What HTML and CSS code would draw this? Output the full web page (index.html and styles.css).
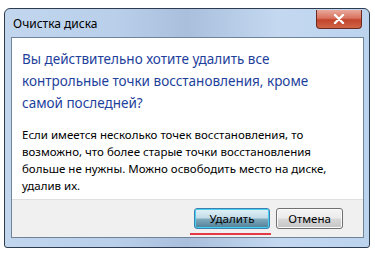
FILE: index.html
```html
<!DOCTYPE html>
<html lang="ru">
<head>
    <meta charset="UTF-8">
    <meta name="viewport" content="width=device-width, initial-scale=1.0">
    <title>Очистка диска</title>
    <link rel="stylesheet" href="styles.css">
</head>
<body>
    <div class="window">
        <div class="titlebar">
            <span class="title">Очистка диска</span>
            <span class="close-btn">
                <svg width="12" height="10" viewBox="0 0 12 10">
                    <path d="M2 1 L10 9 M10 1 L2 9" stroke="#fff" stroke-width="2.4" stroke-linecap="round"/>
                </svg>
            </span>
        </div>
        <div class="client">
            <div class="content">
                <p class="instruction">Вы действительно хотите удалить все контрольные точки восстановления, кроме самой последней?</p>
                <p class="details">Если имеется несколько точек восстановления, то возможно, что более старые точки восстановления больше не нужны. Можно освободить место на диске, удалив их.</p>
            </div>
            <div class="footer">
                <button class="btn btn-default">Удалить</button>
                <button class="btn">Отмена</button>
            </div>
        </div>
    </div>
</body>
</html>
```

FILE: styles.css
```css
body {
    margin: 0;
    background-color: #ffffff;
    font-family: "Noto Sans", "Open Sans", sans-serif;
}
.window {
    margin: 8px 0 0 4px;
    width: 366px;
    height: 240px;
    box-sizing: border-box;
    border: 1px solid #2c3c4e;
    border-radius: 6px 6px 3px 3px;
    background: linear-gradient(90deg, #c2d6ee 0%, #b9cfea 30%, #a9bfdc 50%, #c4d8f0 75%, #bcd3ee 100%);
    padding: 0 5px 9px 6px;
    display: flex;
    flex-direction: column;
    position: relative;
}
.titlebar {
    height: 28px;
    display: flex;
    align-items: center;
    justify-content: space-between;
}
.title {
    font-size: 12px;
    color: #000;
    padding-left: 2px;
    margin-top: 1px;
}
.close-btn {
    position: absolute;
    top: 1px;
    right: 7px;
    width: 46px;
    height: 19px;
    box-sizing: border-box;
    border: 1px solid #6b2a20;
    border-top: none;
    border-radius: 0 0 4px 4px;
    background: linear-gradient(180deg, #e9a99b 0%, #d8735f 45%, #c2442b 55%, #d06548 100%);
    display: flex;
    align-items: center;
    justify-content: center;
}
.client {
    flex: 1;
    border: 1px solid #6f8499;
    background-color: #ffffff;
    display: flex;
    flex-direction: column;
}
.content {
    flex: 1;
    padding: 10px 12px 0 10px;
}
.instruction {
    margin: 0;
    font-size: 13.5px;
    line-height: 22px;
    color: #1e3f9c;
}
.details {
    margin: 12px 0 0 0;
    font-size: 11.5px;
    line-height: 17px;
    color: #000;
}
.footer {
    height: 37px;
    background-color: #f0f0f0;
    border-top: 1px solid #dfdfdf;
    display: flex;
    align-items: center;
    justify-content: flex-end;
    gap: 6px;
    padding-right: 20px;
}
.btn {
    height: 21px;
    width: 67px;
    box-sizing: border-box;
    font-family: "Noto Sans", "Open Sans", sans-serif;
    font-size: 11.5px;
    color: #000;
    padding: 0;
    border: 1px solid #707070;
    border-radius: 3px;
    background: linear-gradient(180deg, #f4f4f4 0%, #ebebeb 48%, #d8d8d8 52%, #c4c4c4 100%);
    box-shadow: inset 0 0 0 1px #fbfbfb;
}
.btn-default {
    width: 76px;
    position: relative;
    border-color: #3c7fb1;
    background: linear-gradient(180deg, #e2f1f7 0%, #c2dce8 48%, #82aabd 52%, #4f8198 100%);
    box-shadow: inset 0 0 0 1px #48d0f2;
}
.btn-default::after {
    content: "";
    position: absolute;
    left: -5px;
    right: -2px;
    bottom: -7px;
    height: 2px;
    background-color: #e23a46;
}
```
